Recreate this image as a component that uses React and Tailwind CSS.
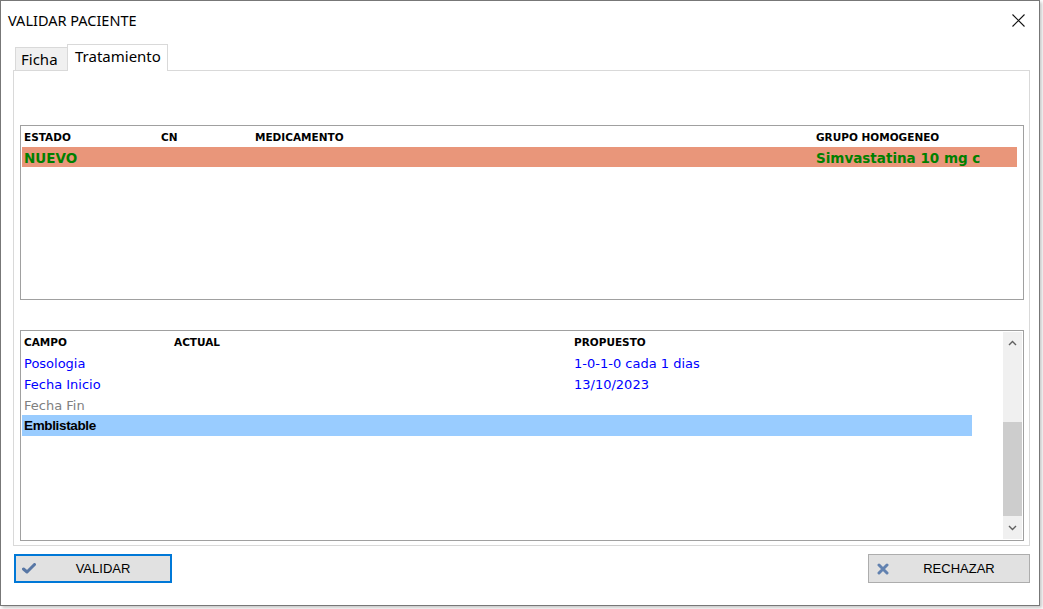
import React from 'react';

const gridFont = { fontFamily: '"DejaVu Sans", Tahoma, sans-serif' };

const tratamiento = [
  { estado: 'NUEVO', cn: '', medicamento: '', grupo: 'Simvastatina 10 mg c' },
];

const cambios = [
  { campo: 'Posologia', actual: '', propuesto: '1-0-1-0 cada 1 dias', tone: 'text-[#0000ff]' },
  { campo: 'Fecha Inicio', actual: '', propuesto: '13/10/2023', tone: 'text-[#0000ff]' },
  { campo: 'Fecha Fin', actual: '', propuesto: '', tone: 'text-[#808080]' },
];

function Chevron({ up }) {
  return (
    <svg width="9" height="6" viewBox="0 0 9 6">
      <polyline
        points={up ? '1,5 4.5,1.5 8,5' : '1,1 4.5,4.5 8,1'}
        fill="none"
        stroke="#606060"
        strokeWidth="1.4"
      />
    </svg>
  );
}

export default function App() {
  return (
    <div className="w-[1043px] h-[609px] bg-white">
      <div
        className="w-[1040px] h-[606px] border border-[#777777] bg-white shadow-[2px_2px_3px_rgba(0,0,0,0.22)]"
        style={{ fontFamily: '"Noto Sans", "Open Sans", sans-serif' }}
      >
        {/* barra de titulo */}
        <div className="h-[43px] flex items-start">
          <div className="pl-[7px] pt-[9px] text-[14.5px] leading-[20px] text-black">VALIDAR PACIENTE</div>
          <svg className="ml-auto mr-[14px] mt-[13px]" width="13" height="13" viewBox="0 0 13 13">
            <path d="M0.5 0.5 L12.5 12.5 M12.5 0.5 L0.5 12.5" stroke="#111" strokeWidth="1.1" />
          </svg>
        </div>

        {/* pestañas */}
        <div className="h-[27px] flex items-end pl-[14px]">
          <div className="w-[52px] h-[23px] mb-px border-t border-l border-[#d9d9d9] bg-[#f0f0f0] pl-[5px] text-[15px] leading-[22px] text-black">
            Ficha
          </div>
          <div className="relative z-10 w-[101px] h-[27px] border-t border-l border-r border-[#d9d9d9] bg-white pl-[7px] text-[15px] leading-[23px] text-black">
            Tratamiento
          </div>
        </div>

        <div className="-mt-px ml-[12px] w-[1017px] h-[476px] border border-[#d9d9d9] bg-white pt-[54px] pl-[6px]">
          {/* grid tratamiento */}
          <div className="w-[1004px] h-[175px] border border-[#a0a0a0] pl-px" style={gridFont}>
            <div className="flex h-[21px] items-center pt-[3px] text-[10.5px] font-bold text-black">
              <div className="w-[137px] pl-[2px]">ESTADO</div>
              <div className="w-[94px] pl-[2px]">CN</div>
              <div className="w-[561px] pl-[2px]">MEDICAMENTO</div>
              <div className="w-[203px] pl-[2px]">GRUPO HOMOGENEO</div>
            </div>
            {tratamiento.map((t) => (
              <div key={t.estado} className="flex w-[995px] h-[20px] items-center pt-[3px] bg-[#e9967a] text-[13.5px] font-bold text-[#008000]">
                <div className="w-[137px] pl-[2px]">{t.estado}</div>
                <div className="w-[94px] pl-[2px]">{t.cn}</div>
                <div className="w-[561px] pl-[2px]">{t.medicamento}</div>
                <div className="w-[203px] pl-[2px] whitespace-nowrap">{t.grupo}</div>
              </div>
            ))}
          </div>

          {/* grid cambios */}
          <div className="mt-[30px] w-[1004px] h-[211px] border border-[#a0a0a0] flex" style={gridFont}>
            <div className="flex-1 pl-px pt-px">
              <div className="flex h-[20px] items-center pt-[2px] text-[10.5px] font-bold text-black">
                <div className="w-[150px] pl-[2px]">CAMPO</div>
                <div className="w-[400px] pl-[2px]">ACTUAL</div>
                <div className="w-[400px] pl-[2px]">PROPUESTO</div>
              </div>
              {cambios.map((c) => (
                <div key={c.campo} className={`flex h-[21px] items-center pt-[3px] text-[13px] ${c.tone}`}>
                  <div className="w-[150px] pl-[2px]">{c.campo}</div>
                  <div className="w-[400px] pl-[2px]">{c.actual}</div>
                  <div className="w-[400px] pl-[2px]">{c.propuesto}</div>
                </div>
              ))}
              <div className="flex w-[950px] h-[21px] items-center pt-[2px] bg-[#99ccff]">
                <div
                  className="pl-[2px] text-[13.5px] font-bold text-black tracking-[-0.35px]"
                  style={{ fontFamily: '"Liberation Sans", Arial, sans-serif' }}
                >
                  Emblistable
                </div>
              </div>
            </div>
            {/* scrollbar */}
            <div className="w-[19px] my-px mr-px bg-[#f0f0f0] flex flex-col">
              <div className="h-[22px] flex items-center justify-center">
                <Chevron up />
              </div>
              <div className="flex-1">
                <div className="mt-[68px] h-[94px] bg-[#cdcdcd]" />
              </div>
              <div className="h-[22px] flex items-center justify-center">
                <Chevron />
              </div>
            </div>
          </div>
        </div>

        {/* botones */}
        <div
          className="mt-[8px] ml-[13px] w-[1016px] flex justify-between text-[13px] text-black"
          style={{ fontFamily: '"Liberation Sans", Arial, sans-serif' }}
        >
          <button className="w-[158px] h-[29px] border-2 border-[#0078d7] bg-[#e1e1e1] flex items-center pl-[6px]">
            <svg width="14" height="11" viewBox="0 0 14 11">
              <path d="M1.5 6 L5 9 L12.5 1.5" fill="none" stroke="#5877a5" strokeWidth="3" strokeLinejoin="round" strokeLinecap="round" />
            </svg>
            <span className="flex-1 text-center">VALIDAR</span>
          </button>
          <button className="w-[162px] h-[29px] border border-[#adadad] bg-[#e1e1e1] flex items-center pl-[8px]">
            <svg width="12" height="12" viewBox="0 0 12 12">
              <path d="M2 2 L10 10 M10 2 L2 10" fill="none" stroke="#6282b0" strokeWidth="3" strokeLinecap="round" />
            </svg>
            <span className="flex-1 text-center">RECHAZAR</span>
          </button>
        </div>
      </div>
    </div>
  );
}
